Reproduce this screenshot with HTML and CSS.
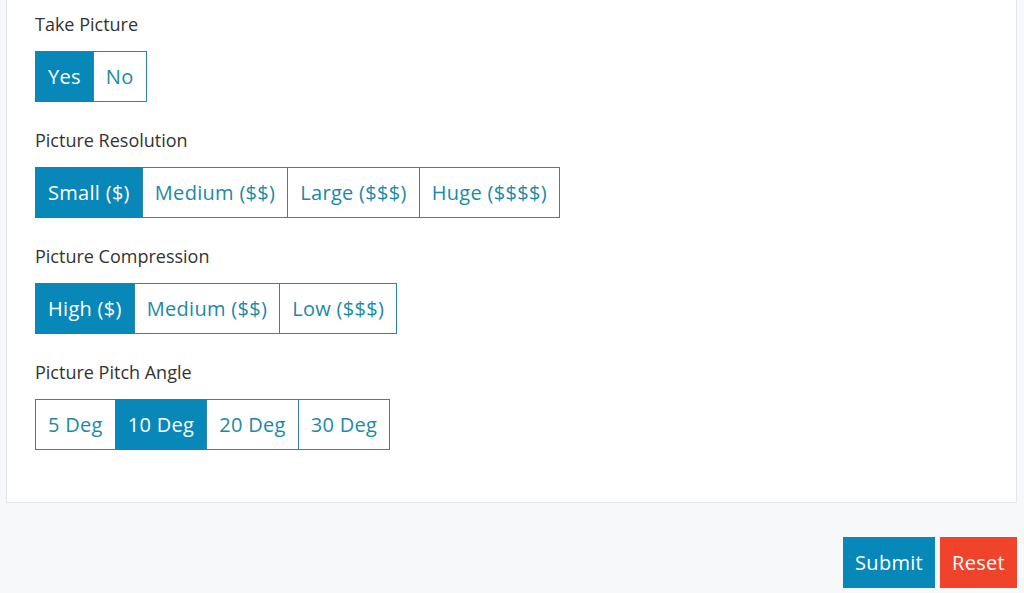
FILE: index.html
```html
<!doctype html>
<html lang="en">
	<head>
		<meta charset="UTF-8" />
		<meta name="viewport" content="width=device-width, initial-scale=1.0" />
		<title>Picture Settings</title>
		<link rel="stylesheet" href="styles.css">
	</head>
	<body>
		<div class="card">
			<div class="field">
				<div class="label">Take Picture</div>
				<div class="btn-group">
					<button class="opt active">Yes</button>
					<button class="opt">No</button>
				</div>
			</div>

			<div class="field">
				<div class="label">Picture Resolution</div>
				<div class="btn-group">
					<button class="opt active">Small ($)</button>
					<button class="opt">Medium ($$)</button>
					<button class="opt">Large ($$$)</button>
					<button class="opt">Huge ($$$$)</button>
				</div>
			</div>

			<div class="field">
				<div class="label">Picture Compression</div>
				<div class="btn-group">
					<button class="opt active">High ($)</button>
					<button class="opt">Medium ($$)</button>
					<button class="opt">Low ($$$)</button>
				</div>
			</div>

			<div class="field">
				<div class="label">Picture Pitch Angle</div>
				<div class="btn-group">
					<button class="opt">5 Deg</button>
					<button class="opt active">10 Deg</button>
					<button class="opt">20 Deg</button>
					<button class="opt">30 Deg</button>
				</div>
			</div>
		</div>

		<div class="actions">
			<button class="action submit">Submit</button>
			<button class="action reset">Reset</button>
		</div>
	</body>
</html>
```

FILE: styles.css
```css
body { margin: 0; background: #f6f8fa; font-family: "Open Sans", "Noto Sans", sans-serif; color: #333; overflow: hidden; }
.card { margin: 0 7px 0 6px; padding: 12px 28px 52px; background: #fff; border: 1px solid #e3e6ea; border-top: none; }
.field { margin-bottom: 26px; }
.field:last-child { margin-bottom: 0; }
.label { font-size: 18px; line-height: 24px; margin-bottom: 15px; }
.btn-group { display: inline-flex; }
.opt { height: 51px; padding: 0 12px; font-family: inherit; font-size: 20px; letter-spacing: 0.3px; color: #1b8aa6; background: #fff; border: 1px solid #2789a5; margin-left: -1px; cursor: pointer; }
.opt:first-child { margin-left: 0; }
.opt.active { background: #0788b9; border-color: #0788b9; color: #fff; }
.actions { display: flex; justify-content: flex-end; gap: 5px; padding: 34px 7px 0 0; }
.action { height: 51px; padding: 0 12px; font-family: inherit; font-size: 20px; letter-spacing: 0.3px; color: #fff; border: none; cursor: pointer; }
.submit { background: #0788b9; }
.reset { background: #f0432b; }
```
